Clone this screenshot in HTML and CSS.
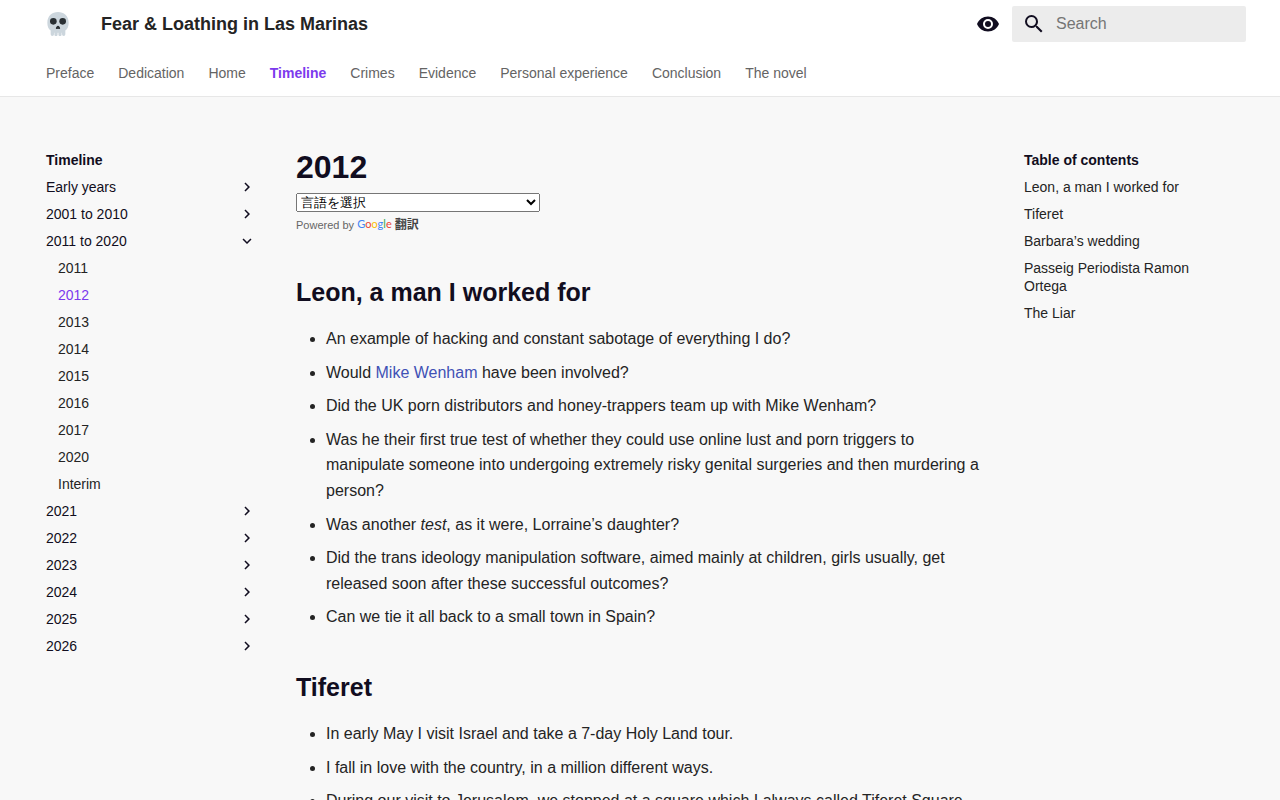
FILE: index.html
```html
<!DOCTYPE html>
<html lang="en">
<head>
<meta charset="utf-8">
<meta name="viewport" content="width=device-width, initial-scale=1">
<title>2012 - Fear &amp; Loathing in Las Marinas</title>
<link rel="stylesheet" href="styles.css">
</head>
<body>
<svg class="sprite" aria-hidden="true">
  <symbol id="chevron" viewBox="0 0 24 24"><path d="M8.59 16.58 13.17 12 8.59 7.41 10 6l6 6-6 6z"/></symbol>
</svg>
<header class="header">
  <div class="wrap topbar">
    <a class="logo" href="#" aria-label="Fear &amp; Loathing in Las Marinas">
      <svg viewBox="0 0 36 36" width="24" height="24">
        <path fill="#ccd6dd" d="M34 16C34 6 26.800 0 18 0S2 6 2 16c0 5.600 1.700 9.200 5 11.800V33.500a2.500 2.500 0 0 0 5 0V31h.6v2.800a2.400 2.400 0 0 0 4.800 0V31h1.200v2.800a2.400 2.400 0 0 0 4.800 0V31h.6v2.500a2.500 2.500 0 0 0 5 0v-5.700c3.300-2.600 5-6.200 5-11.800z"/>
        <circle fill="#292f33" cx="11" cy="14" r="5"/>
        <circle fill="#292f33" cx="25" cy="14" r="5"/>
        <path fill="#292f33" d="M20.200 22c-.6-1-1.300-1.400-2.200-1.400s-1.600.4-2.200 1.400c-.8 1.200-1.400 2.600-.7 3.300.8.700 1.700-.1 2.900-.1s2.100.8 2.900.1c.7-.7.100-2.100-.7-3.300z"/>
      </svg>
    </a>
    <div class="site-title">Fear &amp; Loathing in Las Marinas</div>
    <button class="icon-button" type="button" aria-label="Switch colour mode">
      <svg viewBox="0 0 24 24" width="24" height="24"><path d="M12 9a3 3 0 0 0-3 3 3 3 0 0 0 3 3 3 3 0 0 0 3-3 3 3 0 0 0-3-3m0 8a5 5 0 0 1-5-5 5 5 0 0 1 5-5 5 5 0 0 1 5 5 5 5 0 0 1-5 5m0-12.500C7 4.500 2.730 7.610 1 12c1.730 4.390 6 7.500 11 7.500s9.270-3.110 11-7.500c-1.730-4.390-6-7.500-11-7.500"/></svg>
    </button>
    <form class="search" role="search">
      <label for="query" aria-label="Search">
        <svg viewBox="0 0 24 24" width="24" height="24"><path d="M9.500 3A6.500 6.500 0 0 1 16 9.500c0 1.610-.59 3.090-1.560 4.230l.27.270h.79l5 5-1.500 1.500-5-5v-.79l-.27-.27A6.520 6.520 0 0 1 9.500 16 6.500 6.500 0 0 1 3 9.500 6.500 6.500 0 0 1 9.500 3m0 2C7 5 5 7 5 9.500S7 14 9.500 14 14 12 14 9.500 12 5 9.500 5"/></svg>
      </label>
      <input id="query" type="text" placeholder="Search">
    </form>
  </div>
  <nav class="wrap tabs" aria-label="Tabs">
    <a href="#">Preface</a>
    <a href="#">Dedication</a>
    <a href="#">Home</a>
    <a class="current" href="#">Timeline</a>
    <a href="#">Crimes</a>
    <a href="#">Evidence</a>
    <a href="#">Personal experience</a>
    <a href="#">Conclusion</a>
    <a href="#">The novel</a>
  </nav>
</header>

<div class="wrap layout">
  <nav class="side" aria-label="Timeline">
    <div class="side-title">Timeline</div>
    <a class="section" href="#">Early years <svg class="chevron"><use href="#chevron"/></svg></a>
    <a class="section" href="#">2001 to 2010 <svg class="chevron"><use href="#chevron"/></svg></a>
    <a class="section" href="#">2011 to 2020 <svg class="chevron open"><use href="#chevron"/></svg></a>
    <div class="children">
      <a href="#">2011</a>
      <a class="current" href="#">2012</a>
      <a href="#">2013</a>
      <a href="#">2014</a>
      <a href="#">2015</a>
      <a href="#">2016</a>
      <a href="#">2017</a>
      <a href="#">2020</a>
      <a href="#">Interim</a>
    </div>
    <a class="section" href="#">2021 <svg class="chevron"><use href="#chevron"/></svg></a>
    <a class="section" href="#">2022 <svg class="chevron"><use href="#chevron"/></svg></a>
    <a class="section" href="#">2023 <svg class="chevron"><use href="#chevron"/></svg></a>
    <a class="section" href="#">2024 <svg class="chevron"><use href="#chevron"/></svg></a>
    <a class="section" href="#">2025 <svg class="chevron"><use href="#chevron"/></svg></a>
    <a class="section" href="#">2026 <svg class="chevron"><use href="#chevron"/></svg></a>
  </nav>

  <main class="content">
    <h1>2012</h1>
    <div class="translate">
      <select aria-label="言語翻訳ウィジェット"><option>言語を選択</option></select>
      <div class="powered">Powered by <a href="#"><span class="google"><span class="blue">G</span><span class="red">o</span><span class="yellow">o</span><span class="blue">g</span><span class="green">l</span><span class="red">e</span></span> <b lang="ja">翻訳</b></a></div>
    </div>

    <h2 id="leon">Leon, a man I worked for</h2>
    <ul>
      <li>An example of hacking and constant sabotage of everything I do?</li>
      <li>Would <a href="#">Mike Wenham</a> have been involved?</li>
      <li>Did the UK porn distributors and honey-trappers team up with Mike Wenham?</li>
      <li>Was he their first true test of whether they could use online lust and porn triggers to manipulate someone into undergoing extremely risky genital surgeries and then murdering a person?</li>
      <li>Was another <em>test</em>, as it were, Lorraine’s daughter?</li>
      <li>Did the trans ideology manipulation software, aimed mainly at children, girls usually, get released soon after these successful outcomes?</li>
      <li>Can we tie it all back to a small town in Spain?</li>
    </ul>

    <h2 id="tiferet">Tiferet</h2>
    <ul>
      <li>In early May I visit Israel and take a 7-day Holy Land tour.</li>
      <li>I fall in love with the country, in a million different ways.</li>
      <li>During our visit to Jerusalem, we stopped at a square which I always called Tiferet Square.</li>
    </ul>
  </main>

  <nav class="side toc" aria-label="Table of contents">
    <div class="side-title">Table of contents</div>
    <a href="#leon">Leon, a man I worked for</a>
    <a href="#tiferet">Tiferet</a>
    <a href="#">Barbara’s wedding</a>
    <a href="#">Passeig Periodista Ramon Ortega</a>
    <a href="#">The Liar</a>
  </nav>
</div>
</body>
</html>
```
FILE: styles.css
```css
* {
  box-sizing: border-box;
}

body {
  margin: 0;
  background: #f8f8f8;
  color: #242424;
  font-family: "Liberation Sans", Arial, "Noto Sans CJK JP", sans-serif;
  font-size: 16px;
  line-height: 1.6;
}

a {
  color: inherit;
  text-decoration: none;
}

svg {
  display: block;
  fill: #110d20;
}

.sprite {
  display: none;
}

.wrap {
  max-width: 1220px;
  margin: 0 auto;
}

/* Header */

.header {
  position: sticky;
  top: 0;
  z-index: 4;
  background: #fff;
  border-bottom: 1px solid #e7e7e7;
}

.topbar {
  display: flex;
  align-items: center;
  height: 48px;
  padding: 0 4px;
}

.logo {
  padding: 12px;
}

.site-title {
  flex: 1;
  margin-left: 19px;
  font-size: 18px;
  font-weight: 700;
}

.icon-button {
  margin: 0 12px 0 0;
  padding: 0;
  border: 0;
  background: none;
}

.search {
  display: flex;
  align-items: center;
  width: 234px;
  height: 36px;
  padding: 0 10px;
  border-radius: 2px;
  background: #ececec;
}

.search input {
  flex: 1;
  min-width: 0;
  margin-left: 10px;
  padding: 0;
  border: 0;
  outline: 0;
  background: none;
  font: inherit;
}

.search input::placeholder {
  color: #757575;
}

.tabs {
  display: flex;
  gap: 24px;
  height: 48px;
  padding: 14px 16px 0;
  color: #646464;
  font-size: 14px;
  line-height: 22px;
  white-space: nowrap;
}

.tabs .current {
  color: #7c3aed;
  font-weight: 700;
}

/* Page columns */

.layout {
  display: grid;
  grid-template-columns: 242px minmax(0, 1fr) 242px;
}

.side {
  display: flex;
  flex-direction: column;
  gap: 9px;
  padding: 54px 16px 24px;
  font-size: 14px;
  line-height: 18px;
}

.side-title {
  color: #110d20;
  font-weight: 700;
}

.section {
  display: flex;
  align-items: center;
  justify-content: space-between;
  color: #110d20;
}

.chevron {
  width: 18px;
  height: 18px;
}

.chevron.open {
  transform: rotate(90deg);
}

.children {
  display: flex;
  flex-direction: column;
  gap: 9px;
  padding-left: 12px;
}

.children .current {
  color: #7c3aed;
}

.toc {
  padding-right: 32px;
}

/* Article */

.content {
  padding: 49px 24px 0;
}

h1,
h2 {
  margin: 0;
  color: #110d20;
}

h1 {
  font-size: 32px;
  line-height: 42px;
}

h2 {
  margin: 40px 0 16px;
  font-size: 25px;
  line-height: 35px;
}

.content ul {
  margin: 0;
  padding-left: 30px;
}

.content li {
  margin-bottom: 8px;
}

.content li a {
  color: #4051b5;
}

.translate {
  margin-top: 5px;
}

.translate select {
  display: block;
  width: 244px;
  height: 19px;
  color: #000;
}

.powered {
  padding-top: 3px;
  color: #666;
  font-size: 11px;
  line-height: 20px;
}

.powered b {
  color: #444;
  font-family: "Liberation Sans", "Noto Sans CJK JP", sans-serif;
  font-size: 12px;
  line-height: 1;
}

.google {
  font-family: Lato, sans-serif;
  font-size: 11px;
  line-height: 1;
  vertical-align: 1px;
}

.blue {
  color: #4285f4;
}

.red {
  color: #ea4335;
}

.yellow {
  color: #fbbc05;
}

.green {
  color: #34a853;
}
```
